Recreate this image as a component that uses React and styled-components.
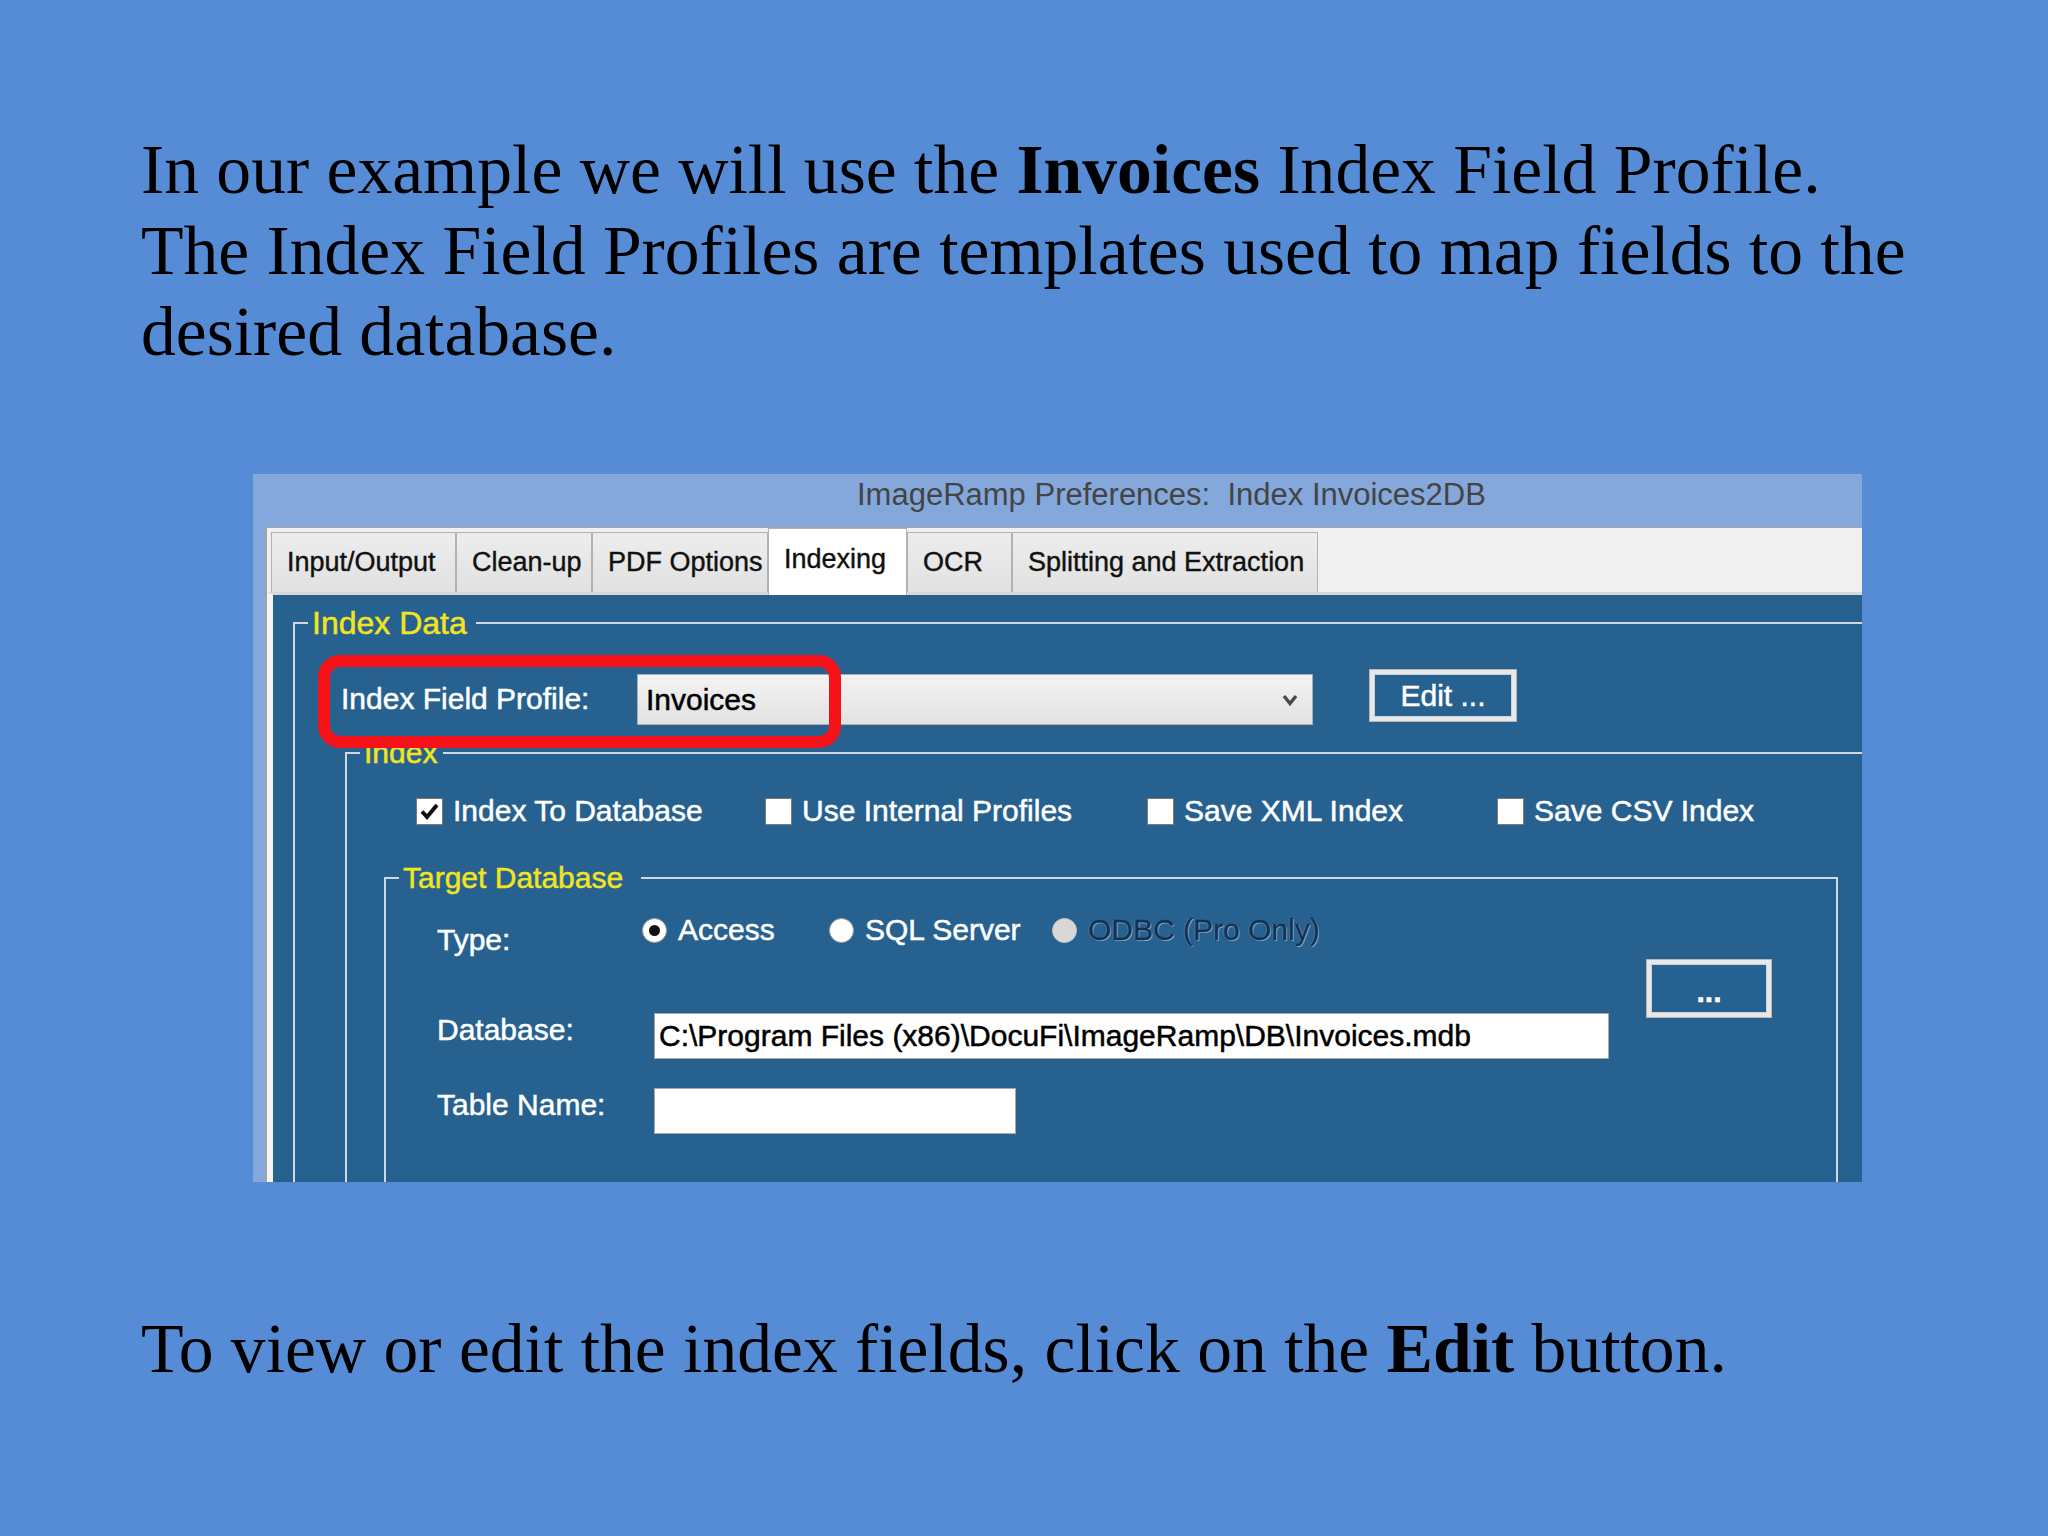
import React from "react";
import styled, { createGlobalStyle } from "styled-components";

const GlobalStyle = createGlobalStyle`
  html, body { margin: 0; padding: 0; }
  body { background: #568cd6; }
`;

const Page = styled.div`
  width: 2048px;
  height: 1536px;
  overflow: hidden;
  background: #568cd6;
  display: flex;
  flex-direction: column;
`;

const SlideText = styled.p`
  margin: ${(p) => p.$top}px 0 0 141px;
  font-family: "Liberation Serif", "Times New Roman", serif;
  font-size: 69.6px;
  line-height: 81px;
  color: #000;
  white-space: nowrap;
`;

const Dialog = styled.section`
  margin: 102px 0 0 253px;
  width: 1609px;
  height: 708px;
  background: #84a8dc;
  display: flex;
  flex-direction: column;
  overflow: hidden;
  font-family: "Liberation Sans", Arial, sans-serif;
`;

const TitleBar = styled.div`
  height: 53px;
  flex: none;
  box-sizing: border-box;
  padding-left: 604px;
  font-size: 31px;
  line-height: 42px;
  color: #444;
  white-space: pre;
`;

const Client = styled.div`
  flex: 1;
  min-height: 0;
  margin-left: 12px;
  display: flex;
  flex-direction: column;
  background: #f0f0f0;
  border-left: 2px solid #a3a3a3;
  border-top: 1px solid #a3a3a3;
`;

const TabStrip = styled.div`
  height: 64px;
  flex: none;
  display: flex;
  align-items: flex-end;
  padding-left: 4px;
`;

const Tab = styled.div`
  box-sizing: border-box;
  width: ${(p) => p.$w}px;
  height: ${(p) => (p.$active ? 67 : 60)}px;
  margin-bottom: ${(p) => (p.$active ? -3 : 0)}px;
  position: relative;
  z-index: ${(p) => (p.$active ? 2 : 1)};
  padding-left: 15px;
  padding-bottom: ${(p) => (p.$active ? 5 : 0)}px;
  display: flex;
  align-items: center;
  border: 1px solid #b2b2b2;
  border-bottom: none;
  background: ${(p) => (p.$active ? "#ffffff" : "linear-gradient(#ededed, #e1e1e1)")};
  font-size: 27px;
  color: #111;
  -webkit-text-stroke: 0.4px #111;
  white-space: nowrap;
`;

const Panel = styled.div`
  flex: 1;
  min-height: 0;
  overflow: hidden;
  background: #266190;
  border-top: 3px solid #d9d9d9;
  border-left: 6px solid #f4f4f4;
  color: #fff;
  font-size: 30px;
  line-height: 30px;
  -webkit-text-stroke: 0.5px currentColor;
`;

const Group = styled.fieldset`
  box-sizing: border-box;
  margin: ${(p) => p.$top}px 0 0 ${(p) => p.$left}px;
  padding: 0 0 260px 0;
  width: ${(p) => (p.$w ? `${p.$w}px` : "auto")};
  min-width: 0;
  border: 2px solid #cfd9e3;
  border-right: ${(p) => (p.$closed ? "2px solid #cfd9e3" : "none")};
  border-bottom: none;
`;

const Legend = styled.legend`
  margin-left: 13px;
  padding: 0 ${(p) => p.$pr || 8}px 0 4px;
  font-size: ${(p) => p.$fs || 30}px;
  line-height: 30px;
  color: #f2e41e;
`;

const ProfileRow = styled.div`
  position: relative;
  display: flex;
  align-items: flex-start;
  padding-left: 46px;
  margin-top: 31px;
`;

const Label = styled.div`
  flex: none;
  width: ${(p) => p.$w}px;
  margin-top: ${(p) => p.$mt || 0}px;
  white-space: nowrap;
`;

const Combo = styled.div`
  flex: none;
  box-sizing: border-box;
  margin-top: 5px;
  width: 676px;
  height: 51px;
  border: 1px solid #acacac;
  background: linear-gradient(#f3f3f3, #e2e2e2);
  display: flex;
  align-items: center;
  justify-content: space-between;
  padding: 0 14px 0 8px;
  color: #000;
`;

const WinButton = styled.button`
  flex: none;
  box-sizing: border-box;
  margin: ${(p) => p.$mt || 0}px 0 0 ${(p) => p.$ml}px;
  width: ${(p) => p.$w}px;
  height: ${(p) => p.$h}px;
  padding: ${(p) => p.$pt || 0}px 0 0 0;
  border: 1px solid #b5b5b5;
  box-shadow: inset 0 0 0 4px #e8e8e8, inset 0 0 0 5px #c9d3dc;
  background: #266190;
  color: #fff;
  font-family: inherit;
  font-size: 30px;
  font-weight: ${(p) => (p.$bold ? 700 : 400)};
  line-height: 30px;
  -webkit-text-stroke: 0.5px #fff;
  display: flex;
  align-items: center;
  justify-content: center;
`;

const Highlight = styled.div`
  position: absolute;
  left: 23px;
  top: -14px;
  width: 523px;
  height: 93px;
  box-sizing: border-box;
  border: 12px solid #f51218;
  border-radius: 22px;
  z-index: 3;
  pointer-events: none;
`;

const CheckRow = styled.div`
  display: grid;
  grid-template-columns: 349px 382px 350px auto;
  padding-left: 69px;
  margin-top: 28px;
  align-items: center;
`;

const CheckItem = styled.div`
  display: flex;
  align-items: center;
  gap: 10px;
  white-space: nowrap;
`;

const Box = styled.span`
  flex: none;
  box-sizing: border-box;
  width: 27px;
  height: 27px;
  background: #fff;
  border: 1px solid #7a7a7a;
  display: flex;
  align-items: center;
  justify-content: center;
`;

const FormRow = styled.div`
  display: flex;
  align-items: flex-start;
  padding-left: 51px;
  margin-top: ${(p) => p.$mt}px;
`;

const RadioGroup = styled.div`
  display: flex;
  margin-left: -12px;
`;

const RadioItem = styled.div`
  flex: none;
  width: ${(p) => (p.$w ? `${p.$w}px` : "auto")};
  display: flex;
  align-items: center;
  gap: 11px;
  line-height: 26px;
  white-space: nowrap;
  color: ${(p) => (p.$disabled ? "#12324f" : "#fff")};
  -webkit-text-stroke: ${(p) => (p.$disabled ? "0.3px" : "0.5px")} currentColor;
  text-shadow: ${(p) => (p.$disabled ? "1px 1px 0 #86a9d0, -1px 0 0 #4f7fae" : "none")};
`;

const RadioDot = styled.span`
  flex: none;
  box-sizing: border-box;
  width: 25px;
  height: 25px;
  border-radius: 50%;
  background: ${(p) => (p.$disabled ? "#d8d8d8" : "#fff")};
  border: 1px solid ${(p) => (p.$disabled ? "#c4c4c4" : "#9a9a9a")};
  display: flex;
  align-items: center;
  justify-content: center;
  &::after {
    content: "";
    display: ${(p) => (p.$on ? "block" : "none")};
    width: 11px;
    height: 11px;
    border-radius: 50%;
    background: #111;
  }
`;

const TextInput = styled.div`
  flex: none;
  box-sizing: border-box;
  width: ${(p) => p.$w}px;
  height: 46px;
  background: #fff;
  border: 1px solid #a8a8a8;
  color: #000;
  padding-left: 4px;
  display: flex;
  align-items: center;
  white-space: nowrap;
`;

const tabs = [
  { label: "Input/Output", w: 185 },
  { label: "Clean-up", w: 136 },
  { label: "PDF Options", w: 176 },
  { label: "Indexing", w: 139, active: true },
  { label: "OCR", w: 105 },
  { label: "Splitting and Extraction", w: 306 },
];

const checks = [
  { label: "Index To Database", on: true },
  { label: "Use Internal Profiles" },
  { label: "Save XML Index" },
  { label: "Save CSV Index" },
];

const Chevron = () => (
  <svg width="16" height="12" viewBox="0 0 16 12">
    <path d="M2 2 L8 9.5 L14 2" fill="none" stroke="#4a4a4a" strokeWidth="3.4" />
  </svg>
);

const Tick = () => (
  <svg width="21" height="21" viewBox="0 0 21 21">
    <path d="M3 10.5 L8 16 L18 4" fill="none" stroke="#111" strokeWidth="4" />
  </svg>
);

export default function App() {
  return (
    <>
      <GlobalStyle />
      <Page>
        <SlideText $top={129}>
          In our example we will use the <b>Invoices</b> Index Field Profile.
          <br />
          The Index Field Profiles are templates used to map fields to the
          <br />
          desired database.
        </SlideText>

        <Dialog>
          <TitleBar>ImageRamp Preferences:  Index Invoices2DB</TitleBar>
          <Client>
            <TabStrip>
              {tabs.map((t) => (
                <Tab key={t.label} $w={t.w} $active={t.active}>
                  {t.label}
                </Tab>
              ))}
            </TabStrip>
            <Panel>
              <Group $top={13} $left={20}>
                <Legend $pr={9} $fs={32}>
                  Index Data
                </Legend>
                <ProfileRow>
                  <Highlight />
                  <Label $w={296} $mt={15}>
                    Index Field Profile:
                  </Label>
                  <Combo>
                    <span>Invoices</span>
                    <Chevron />
                  </Combo>
                  <WinButton $ml={56} $w={148} $h={53}>
                    Edit ...
                  </WinButton>
                </ProfileRow>

                <Group $top={13} $left={50}>
                  <Legend $pr={6}>Index</Legend>
                  <CheckRow>
                    {checks.map((c) => (
                      <CheckItem key={c.label}>
                        <Box>{c.on && <Tick />}</Box>
                        {c.label}
                      </CheckItem>
                    ))}
                  </CheckRow>

                  <Group $top={37} $left={37} $w={1454} $closed>
                    <Legend $pr={18}>Target Database</Legend>
                    <FormRow $mt={24}>
                      <Label $w={217} $mt={8}>
                        Type:
                      </Label>
                      <RadioGroup>
                        <RadioItem $w={187}>
                          <RadioDot $on />
                          Access
                        </RadioItem>
                        <RadioItem $w={223}>
                          <RadioDot />
                          SQL Server
                        </RadioItem>
                        <RadioItem $disabled>
                          <RadioDot $disabled />
                          ODBC (Pro Only)
                        </RadioItem>
                      </RadioGroup>
                    </FormRow>
                    <FormRow $mt={58}>
                      <Label $w={217} $mt={2}>
                        Database:
                      </Label>
                      <TextInput $w={955}>
                        C:\Program Files (x86)\DocuFi\ImageRamp\DB\Invoices.mdb
                      </TextInput>
                      <WinButton $ml={37} $mt={-54} $w={126} $h={59} $pt={6} $bold>
                        ...
                      </WinButton>
                    </FormRow>
                    <FormRow $mt={29}>
                      <Label $w={217} $mt={2}>
                        Table Name:
                      </Label>
                      <TextInput $w={362} />
                    </FormRow>
                  </Group>
                </Group>
              </Group>
            </Panel>
          </Client>
        </Dialog>

        <SlideText $top={126}>
          To view or edit the index fields, click on the <b>Edit</b> button.
        </SlideText>
      </Page>
    </>
  );
}
